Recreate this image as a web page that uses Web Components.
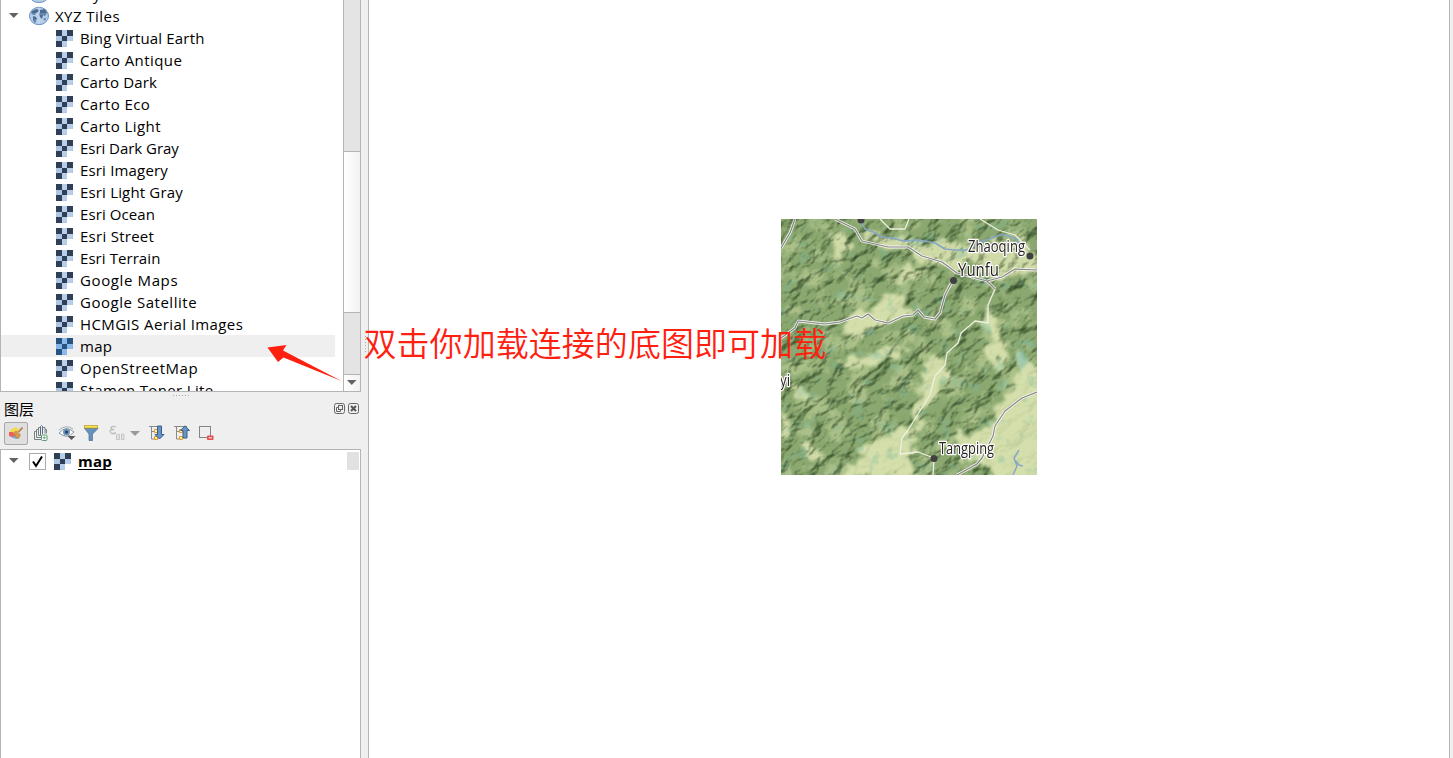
<!DOCTYPE html>
<html lang="zh-CN">
<head>
<meta charset="utf-8">
<title>QGIS</title>
<style>
html,body{margin:0;height:100%;overflow:hidden;background:#efefef}
body{font-family:"Open Sans","Noto Sans CJK SC",sans-serif;font-size:15px;color:#000}
</style>
</head>
<body>
<gis-window></gis-window>
<script>
const define = (name, html, setup) => customElements.define(name, class extends HTMLElement {
  constructor() {
    super();
    const t = document.createElement('template');
    t.innerHTML = html;
    this.attachShadow({mode: 'open'}).append(t.content.cloneNode(true));
  }
  connectedCallback() { if (setup) setup(this, this.shadowRoot); }
});

define('tile-icon', `<style>:host{display:block;width:17px;height:17px;flex:none}svg{display:block}
.d{fill:var(--tile-dark,#2f3f55)}.l{fill:var(--tile-light,#aec6e5)}.m{fill:var(--tile-mid,#b9cee9)}</style>
<svg width="17" height="17" viewBox="0 0 17 17" shape-rendering="crispEdges">
<path class="l" d="M0 0h17v11h-6v6H0z"/><path class="m" d="M6 0h5v6H6zM11 6h5v5h-5zM6 11h5v5H6z"/>
<path class="d" d="M0 0h6v6H0zM11 0h6v6h-6zM6 6h5v5H6zM0 11h6v6H0z"/></svg>`);

define('globe-icon', `<style>:host{display:block;width:20px;height:20px;flex:none}svg{display:block}</style>
<svg width="20" height="20" viewBox="0 0 20 20"><ellipse cx="10" cy="10" rx="9.5" ry="8.700" fill="#b4cdea" stroke="#6d94c1"/>
<path d="M3 5l4-2 3 1-1 2-2 1-1 2-2 0-2-2zM4 10l3 1 1 2-2 4-2-3zM11 4l5-1 2 4-2 3-2-1-1 4-2-2-1-3 1-2zM14 13l3-1-1 3z" fill="#4b6c91"/><path d="M2 8h16M5 14h11M10 1v17" stroke="#dce8f5" stroke-width=".6" opacity=".7"/></svg>`);

define('tree-twisty', `<style>:host{display:block;width:10px;height:6px;flex:none}svg{display:block}</style>
<svg width="10" height="6"><path d="M0 0h9.500L4.750 5z" fill="#636363"/></svg>`);

define('tree-row', `<style>
:host{display:flex;align-items:center;height:22px;flex:none;padding-left:55px;gap:7px;line-height:22px;white-space:nowrap}
:host([selected]){background:#efefef;width:279px;--tile-dark:#275381;--tile-light:#82b4e9;--tile-mid:#8cbaec}
span{letter-spacing:var(--track,0)}
</style><tile-icon></tile-icon><span><slot></slot></span>`);

define('tree-group', `<style>
:host{display:flex;align-items:center;height:22px;flex:none;padding-left:7.500px;line-height:22px;white-space:nowrap}
globe-icon{margin:0 6px 0 10.500px}
span{letter-spacing:.45px}
</style><tree-twisty></tree-twisty><globe-icon></globe-icon><span><slot></slot></span>`);

define('scroll-bar', `<style>
:host{display:flex;flex-direction:column;width:16px;flex:none;border-left:1px solid #b4b4b4;background:#e4e4e4}
.above{height:151px}.thumb{height:160px;border:solid #b4b4b4;border-width:1px 0;background:linear-gradient(90deg,#fff,#f1f1f1)}
.below{flex:1}.down{height:17px;border-top:1px solid #b4b4b4;background:linear-gradient(90deg,#fff,#f1f1f1);display:flex;justify-content:center;padding:0 1px 0 0;align-items:center;box-sizing:border-box}
</style><div class="above"></div><div class="thumb"></div><div class="below"></div><div class="down"><tree-twisty></tree-twisty></div>`);

define('browser-panel', `<style>
:host{display:flex;height:391px;flex:none;border:1px solid #b4b4b4;border-top:0;background:#fff;box-sizing:content-box}
.rows{flex:1;min-width:0;overflow:hidden;display:flex;flex-direction:column}
</style><div class="rows"><slot></slot></div><scroll-bar></scroll-bar>`);

define('browser-items', `<style>:host{display:flex;flex-direction:column;flex:none}
.prev{height:5px;display:flex;align-items:flex-end;overflow:hidden;padding-left:28px}
.prev svg{display:block}.prev span{line-height:22px;margin-left:44px}</style><div class="prev"><svg width="20" height="5"><path d="M1-3q2 5.500 9 5.500T19-3" fill="#b4cdea" stroke="#6d94c1"/></svg><span>y</span></div><div class="list"></div>`, (host, root) => {
  const box = root.querySelector('.list');
  /* label and letter spacing in px */
  const names = [['Bing Virtual Earth',.17],['Carto Antique',.42],['Carto Dark',.17],['Carto Eco',.39],['Carto Light',.4],['Esri Dark Gray',-.04],['Esri Imagery',.17],['Esri Light Gray',.17],['Esri Ocean',.1],['Esri Street',.27],['Esri Terrain',.07],['Google Maps',.62],['Google Satellite',.53],['HCMGIS Aerial Images',.4],['map',.3],['OpenStreetMap',.52],['Stamen Toner Lite',.35]];
  const head = document.createElement('tree-group'); head.textContent = 'XYZ Tiles';
  box.append(head);
  for (const [n, track] of names) {
    const r = document.createElement('tree-row');
    r.textContent = n;
    r.style.setProperty('--track', track + 'px');
    if (n === 'map') r.toggleAttribute('selected', true);
    box.append(r);
  }
});

define('title-bar', `<style>
:host{display:flex;align-items:center;height:24px;padding:0 2px 0 4px;line-height:24px}
span{flex:1}svg{margin:-2px 0 0 3px;display:block}
</style><span><slot></slot></span>
<svg width="11" height="11" fill="none" stroke="#666"><rect x=".5" y=".5" width="10" height="10" rx="2"/><rect x="4.5" y="2.5" width="4" height="4"/><path d="M4 4.5H2.5v4h4V7"/></svg>
<svg width="11" height="11" fill="none" stroke="#666"><rect x=".5" y=".5" width="10" height="10" rx="2"/><path d="M3 3l5 5M8 3L3 8" stroke="#555" stroke-width="2"/></svg>`);

define('layer-toolbar', `<style>
:host{display:flex;height:24px;padding-left:4px;align-items:center}
svg{display:block;width:16px;height:16px;flex:none;overflow:visible}
.on{width:22px;height:21px;border:1px solid #a9a9a9;border-radius:2px;background:#dfdfdf;display:grid;place-items:center;margin-right:4px}
</style>
<div class="on"><svg viewBox="0 0 16 16"><path d="M2 5l6-3 3 3-3 4-5-1z" fill="#f4d94d"/><path d="M1 7l4 0 3 4-2 2-5-2z" fill="#e8605c"/><path d="M3 12l3-1 5 2-3 1z" fill="#77a8db"/><path d="M6.500 7l2-1 4 4-2 3.500-3-1.500z" fill="#d49a50" stroke="#b5793a" stroke-width=".6"/><path d="M10.500 7l4-4.500" stroke="#bd7d3d" stroke-width="1.800"/></svg></div>
<svg viewBox="0 0 16 16" fill="none" stroke="#7b8183"><path d="M4 6.500H2.500v8H9M6 4.500H4.500v8H9M8.500 2.500h-2v8H9M10 2.500h3v6M13 4.500h1.500v4"/><path d="M8.500 10V1.500q1-2 2 0V9" stroke="#506d83"/><rect x="9.500" y="10" width="5.500" height="5.500" rx="1" fill="#fff" stroke="#5e9a72"/><path d="M12.250 11.300v3M10.800 12.750h3" stroke="#5eaa72"/></svg>
<svg style="margin-left:11px" viewBox="0 0 16 16"><path d="M0 8q7-8 15-1-7 8-15 1" fill="#fff" stroke="#8e9699"/><path d="M0 5Q7-1 14 4" fill="none" stroke="#a4adb1"/><circle cx="7.500" cy="7" r="3.500" fill="#6d94bd"/><circle cx="7.500" cy="7" r="1.500" fill="#253d57"/><path d="M8.500 11h8l-4 4z" fill="#595959"/></svg>
<svg style="margin-left:8px" viewBox="0 0 16 16"><path d="M1.500 3.500L6 9v6.500h3.500V9L15 3.500z" fill="#6792bd" stroke="#496d92" stroke-width=".7"/><rect x="1.500" y=".5" width="13" height="2.500" fill="#fbe550" stroke="#b59a28" stroke-width=".7"/></svg>
<svg style="margin-left:10px" viewBox="0 0 16 16" fill="none" stroke="#bcbcbc"><path d="M7 2Q2 .5 2 3q0 1.500 3 1.500-4 0-4 2Q1.500 9.500 7 8" stroke-width="1.300"/><path d="M7.500 14.500V10q3-2 3 0v4.500zM12.500 14.500V9q2-1 2.500 1v4.500z" fill="#e2e2e2" stroke-width=".8"/></svg>
<svg style="width:10px;height:5px;margin-left:5px;margin-right:10px" viewBox="0 0 10 5"><path d="M0 0h10L5 5z" fill="#999"/></svg>
<svg viewBox="0 0 16 16"><path d="M-1 1.500h13M1.500 2v12h4M1.500 6.500h4" fill="none" stroke="#8a8a8a"/><path d="M4.500 4.500h3v3h-3zM4.500 11.500h3v3h-3z" fill="#fff3a5" stroke="#e99a26"/><path d="M7.500 1h4v8.500h2.500L9.500 14 5 9.500h2.500z" fill="#6694c5" stroke="#385f8c"/></svg>
<svg style="margin-left:9px" viewBox="0 0 16 16"><path d="M-1 1.500h13M1.500 2v12h4M1.500 6.500h4" fill="none" stroke="#8a8a8a"/><path d="M4.500 4.500h3v3h-3zM4.500 11.500h3v3h-3z" fill="#fff3a5" stroke="#e99a26"/><path d="M8 13h4V5.500h2.500L10 .8 5.500 5.500H8z" fill="#6694c5" stroke="#385f8c"/></svg>
<svg style="margin-left:8px" viewBox="0 0 16 16"><rect x=".5" y="1.500" width="11" height="11" fill="#eee" stroke="#858585"/><rect x="8" y="10.500" width="6.500" height="4.500" rx="1" fill="#e64c4f"/><path d="M9.500 12.800h3.500" stroke="#fff"/></svg>`);

define('layer-tree', `<style>
:host{display:block;flex:1;border:1px solid #b4b4b4;border-bottom:0;background:#fff;font-weight:700}
.row{display:flex;align-items:center;height:22px;padding:0 1px 0 7.500px}
.box{width:15px;height:15px;border:1px solid #aaa;margin:0 8px 0 10.500px;display:block;flex:none}
u{margin-left:7px;flex:1;line-height:22px;letter-spacing:.2px;text-underline-offset:2px;text-decoration-thickness:1px;text-decoration-skip-ink:none}i{width:12px;height:18px;background:#e1e1e1}
</style><div class="row"><tree-twisty></tree-twisty><svg class="box" viewBox="0 0 15 15"><path d="M3 7.500L6 12 12 2.500" fill="none" stroke="#000" stroke-width="2"/></svg><tile-icon></tile-icon><u><slot></slot></u><i></i></div>`);

define('layers-panel', `<style>
:host{display:flex;flex-direction:column;flex:1}
.grip{height:5px;padding:3px 0 0 173px;box-sizing:border-box}
.grip b{display:block;width:17px;height:1px;background:repeating-linear-gradient(90deg,#aaa 0 1px,transparent 1px 3px)}
layer-toolbar{margin-bottom:4px}
</style><div class="grip"><b></b></div><title-bar>图层</title-bar><layer-toolbar></layer-toolbar><layer-tree>map</layer-tree>`);

define('terrain-tile', `<style>:host{display:block;width:256px;height:256px}svg{display:block}
text{font-family:"Open Sans",sans-serif;fill:#262220;stroke:#fff;stroke-width:2.600px;paint-order:stroke;stroke-linejoin:round}</style>
<svg width="256" height="256" viewBox="0 0 256 256">
<defs>
<filter id="hill" x="0" y="0" width="100%" height="100%" color-interpolation-filters="sRGB">
<feTurbulence type="fractalNoise" baseFrequency=".05 .078" numOctaves="5" seed="14"/>
<feColorMatrix values="0 0 0 0 0 0 0 0 0 0 0 0 0 0 0 1 0 0 0 0"/>
<feDiffuseLighting surfaceScale="7" diffuseConstant="1.200" lighting-color="#fff"><feDistantLight azimuth="262" elevation="60"/></feDiffuseLighting>
<feColorMatrix values=".62 0 0 0 .36 0 .54 0 0 .44 0 0 .64 0 .34 0 0 0 1 0"/></filter>
<filter id="soft" x="-20%" y="-20%" width="140%" height="140%"><feTurbulence type="fractalNoise" baseFrequency=".06" numOctaves="4" seed="5" result="t"/><feDisplacementMap in="SourceGraphic" in2="t" scale="26" xChannelSelector="R" yChannelSelector="G"/><feGaussianBlur stdDeviation="1.800"/></filter>
<filter id="mott" x="0" y="0" width="100%" height="100%" color-interpolation-filters="sRGB"><feTurbulence type="fractalNoise" baseFrequency=".045" numOctaves="5" seed="9"/><feColorMatrix values="0 0 0 0 .82 0 0 0 0 .88 0 0 0 0 .66 5 0 0 0 -2.500"/></filter>
<filter id="blue" x="0" y="0" width="100%" height="100%" color-interpolation-filters="sRGB"><feTurbulence type="fractalNoise" baseFrequency=".07" numOctaves="3" seed="31"/><feColorMatrix values="0 0 0 0 .5 0 0 0 0 .74 0 0 0 0 .64 0 6 0 0 -3.600"/></filter>
<mask id="flat"><rect width="256" height="256" fill="#fff"/><g filter="url(#soft)" fill="#000" opacity=".85"><path d="M54 104l30-22 30-8 18 12-14 12-26 8-20 12zM58 141l24-12 34-8 10 2-30 13-30 10zM142 150l16-18 8 5-10 36-16 22-12 24-14 12 2 28H100l-8-14 18-20 18-16zM176 216l30-8 16-30 38-20v100h-46l-16-20-22-4zM205 88l12 14 2 50-10-4-8-50zM236 132l20 14v30l-22 2zM60 256l10-20 30-20 25-8 10 20-8 28z"/></g></mask>
<clipPath id="c"><rect width="256" height="256"/></clipPath>
</defs>
<g clip-path="url(#c)">
<rect width="256" height="256" fill="#8eac72"/>
<rect width="256" height="256" filter="url(#mott)" opacity=".48"/>
<g filter="url(#soft)" fill="#d5e0ac"><path d="M58 108l30-22 30-8 18 12-14 12-26 8-20 12zM62 145l24-12 34-8 10 2-30 13-30 10zM144 152l16-18 8 5-10 36-16 22-12 24-14 12 2 28H102l-8-14 18-20 18-16zM178 218l30-8 16-30 38-20v100h-46l-16-20-22-4zM207 90l12 14 2 50-10-4-8-50zM238 134l20 14v30l-22 2zM62 258l10-20 30-20 25-8 10 20-8 28zM87 10l40 10 40 8 32-5 45 0 15 30-40 10-24-12-40-8-50-18-25 0zM116 60l14-14 2 10-10 14zM4 160l16 5 8 16-12-4zM0 190l14 10-4 20-10-4zM48 12l14 6 4 20-8 6-6-14zM20 222l16 8 4 14-14-4z"/></g>
<rect width="256" height="256" filter="url(#blue)" opacity=".35"/>
<g style="mix-blend-mode:multiply" mask="url(#flat)"><g transform="rotate(-38 128 128)"><rect x="-70" y="-70" width="396" height="396" filter="url(#hill)"/></g></g>
<g fill="#80bdb0" opacity=".6" filter="url(#soft)"><path d="M238 140l8-6 6 6-4 10-10 2zM244 128l4-6 3 6zM84 116l5-3 4 2-4 6z"/></g>
<g fill="none" stroke-linejoin="round">
<path d="M80 2l4 8 8 3 9 5 10 1 11 3 15-1 17 3 10 6 10 1 13 0 12-8 12-4 8-3 5 0 10 3 8 11M238 231l-5 8 3 8-4 9M233 240l5 6 4 1" stroke="#86a7c6" stroke-width="1.500"/>
<path d="M99 0l10 10 15 0 4-10M199 0l18 11 17 5 15 15M214 70l-7 16v18l-13-2-14 12-3 10-11 10-2 12-10 11-5 19-22 35-6 8-2 16 18-2 16 6-1 17" stroke="#edf0df" stroke-width="1.300"/>
<g stroke="#fff" stroke-width="2.800" opacity=".85"><path d="M54 0l20 10 7 12 26 6h20l14 9 20 6 15 11 30 8 8 8M206 62l15-4 13-8 22 1M172 61l-8 15-5 18-5 6-11-2-6-7-5 5-10 1-15 7-13-3-7-6-6 4-5-2-17 6-15 2-27-3-3 7-14 10M256 173l-15 6-17 13-10 15-2 10-11 22-5 6-20 11M14 0L9 14 0 29"/></g>
<g stroke="#858583" stroke-width="1.200"><path d="M54 0l20 10 7 12 26 6h20l14 9 20 6 15 11 30 8 8 8M206 62l15-4 13-8 22 1M172 61l-8 15-5 18-5 6-11-2-6-7-5 5-10 1-15 7-13-3-7-6-6 4-5-2-17 6-15 2-27-3-3 7-14 10M256 173l-15 6-17 13-10 15-2 10-11 22-5 6-20 11M14 0L9 14 0 29"/></g>
</g>
<g fill="#404040"><circle cx="80" cy="1" r="3.500"/><circle cx="249" cy="37" r="3.500"/><circle cx="172.500" cy="61.500" r="3.500"/><circle cx="153" cy="239.500" r="3.500"/></g>
<text x="187" y="33" font-size="15.500" textLength="57" lengthAdjust="spacingAndGlyphs">Zhaoqing</text>
<text x="177" y="57" font-size="19" textLength="41" lengthAdjust="spacingAndGlyphs">Yunfu</text>
<text x="158" y="235" font-size="15.500" textLength="55" lengthAdjust="spacingAndGlyphs">Tangping</text>
<text x="-1" y="167" font-size="15.500" textLength="10" lengthAdjust="spacingAndGlyphs">yi</text>
</g></svg>`);

define('map-canvas', `<style>
:host{display:flex;flex:1;border:solid #b4b4b4;border-width:0 1px;background:#fff;margin-right:3px;align-items:flex-start;padding:219px 0 0 412px}
</style><terrain-tile></terrain-tile>`);

define('red-note', `<style>
:host{position:absolute;left:363.500px;top:317.500px;color:#ff2010;font:350 33px/48px "Noto Sans CJK SC DemiLight","Noto Sans CJK SC",sans-serif;letter-spacing:.05px;white-space:nowrap}
</style><slot></slot>`);

define('red-arrow', `<style>:host{position:absolute;left:266px;top:343px}svg{display:block}</style>
<svg width="76" height="40"><path d="M1.500 4.500L20.500 2 17 7.500 75.500 38 17.500 14.500 12 19z" fill="#ff2010"/></svg>`);

define('gis-window', `<style>
:host{display:flex;height:758px;position:relative;overflow:hidden;background:#efefef}
.dock{width:361px;display:flex;flex-direction:column;flex:none}
.split{width:7px;display:flex;align-items:center;justify-content:flex-end;flex:none}
.split b{width:1px;height:17px;margin:-70px 2px 0 0;background:repeating-linear-gradient(#aaa 0 1px,transparent 1px 3px)}
</style>
<div class="dock"><browser-panel><browser-items></browser-items></browser-panel><layers-panel></layers-panel></div>
<div class="split"><b></b></div><map-canvas></map-canvas>
<red-arrow></red-arrow><red-note>双击你加载连接的底图即可加载</red-note>`);
</script>
</body>
</html>
